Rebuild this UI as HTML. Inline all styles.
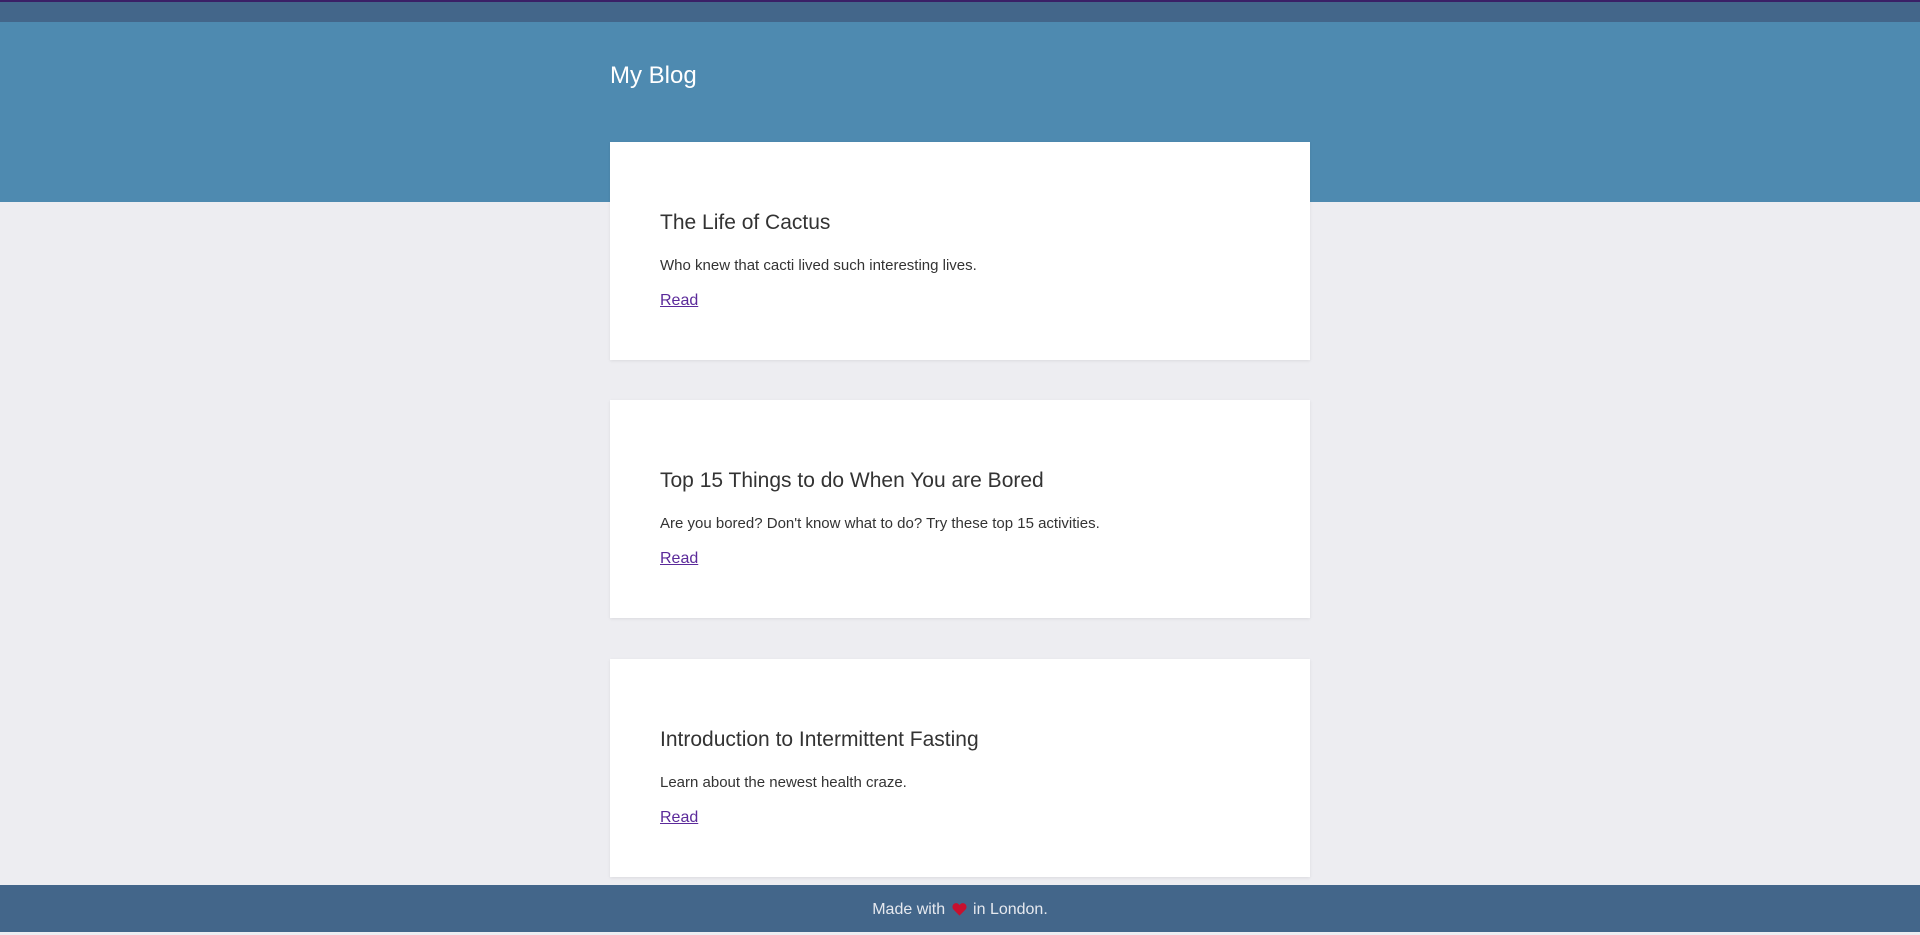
<!DOCTYPE html>
<html><head><meta charset="utf-8"><style>
*{margin:0;padding:0;box-sizing:border-box}
body{width:1920px;height:932px;background:#ededf1;font-family:"Liberation Sans",sans-serif;position:relative;overflow:hidden}
.top{position:absolute;left:0;top:0;width:1920px;height:2px;background:#3a1f66}
.nav{position:absolute;left:0;top:2px;width:1920px;height:20px;background:#43668a}
.hdr{position:absolute;left:0;top:22px;width:1920px;height:180px;background:#4e8ab0}
.brand{position:absolute;left:610px;top:62px;color:#fff;font-size:24px;font-weight:300}
.card{position:absolute;left:610px;width:700px;height:218px;background:#fff;box-shadow:0 1px 3px rgba(0,0,0,.08)}
.card h2{position:absolute;left:50px;top:69px;font-size:21px;font-weight:400;color:#333;white-space:nowrap}
.card p{position:absolute;left:50px;top:115px;font-size:15px;color:#333;white-space:nowrap}
.card a{position:absolute;left:50px;top:150px;font-size:16px;color:#5b2a9a;text-decoration:underline}
.foot{position:absolute;left:0;top:885px;width:1920px;height:47px;background:#43668a;color:#e6e9ef;font-size:16px;text-align:center;line-height:50px}
.foot svg{vertical-align:-2px;margin:0 2px}
</style></head><body>
<div class="top"></div><div class="nav"></div><div class="hdr"></div>
<div class="brand">My Blog</div>
<div class="card" style="top:142px"><h2>The Life of Cactus</h2><p>Who knew that cacti lived such interesting lives.</p><a>Read</a></div>
<div class="card" style="top:400px"><h2>Top 15 Things to do When You are Bored</h2><p>Are you bored? Don't know what to do? Try these top 15 activities.</p><a>Read</a></div>
<div class="card" style="top:659px"><h2>Introduction to Intermittent Fasting</h2><p>Learn about the newest health craze.</p><a>Read</a></div>
<div class="foot">Made with <svg width="15" height="14" viewBox="0 0 24 22"><path d="M12 21.5 2.5 12C-1 8.5 1 1.5 6.5 1.5c2.7 0 4.3 1.6 5.5 3.3 1.2-1.7 2.8-3.3 5.5-3.3C23 1.5 25 8.5 21.5 12z" fill="#c8102e"/></svg> in London.</div>
</body></html>
